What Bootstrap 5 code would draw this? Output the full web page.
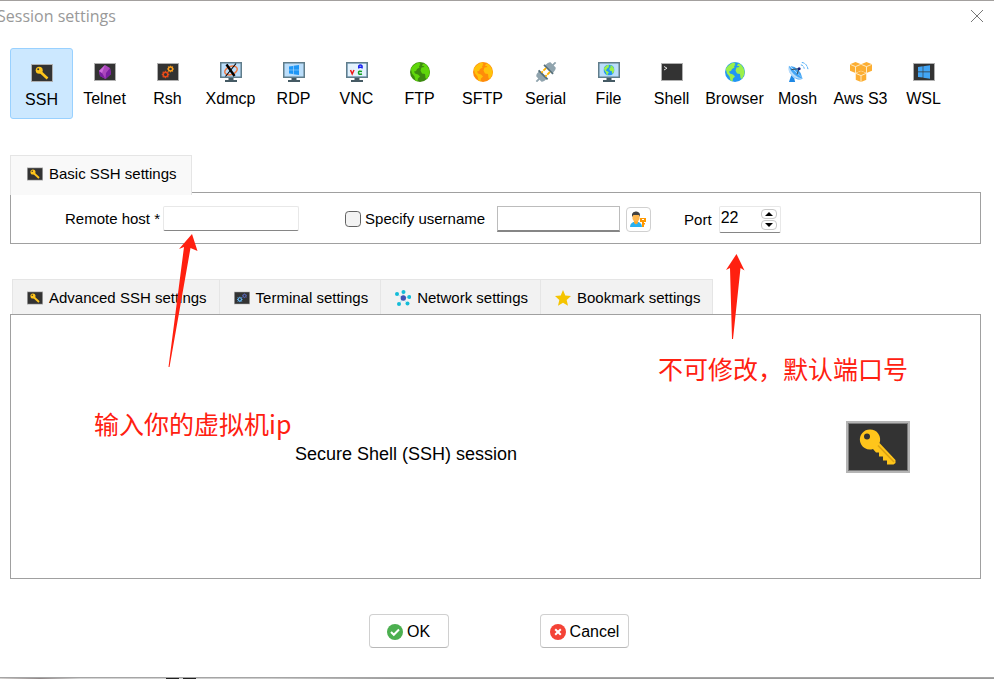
<!DOCTYPE html>
<html lang="en">
<head>
<meta charset="utf-8">
<meta name="viewport" content="width=device-width, initial-scale=1">
<title>Session settings</title>
<link href="https://cdn.jsdelivr.net/npm/bootstrap@5.3.0/dist/css/bootstrap.min.css" rel="stylesheet">
<style>
  body { font-family: "Liberation Sans", Arial, sans-serif; font-size: 15px; line-height: 20px; color: #000; background: #fff; }
  .dialog { border-top: 1px solid #a3a09e; }
  .dialog-head { height: 47px; padding-right: 10px; }
  .dialog-title { font-family: "Open Sans", "Noto Sans", sans-serif; font-size: 16px; line-height: 30px; margin: 0 0 0 -3px; color: #999; font-weight: 400; }
  .close-btn { width: 14px; height: 30px; color: #777; }
  .dialog-main { padding: 0 13px 0 10px; }
  .kinds { margin-bottom: 36px; }
  .kind { width: 63px; height: 71px; padding: 0 0 9px; gap: 7px; border: 1px solid transparent; border-radius: 3px; background: none; font-size: 16px; color: #000; white-space: nowrap; }
  .kind.active { background: #cce8ff; border-color: #99d1ff; padding-bottom: 8px; }
  .kind svg { width: 22px; height: 20px; }
  .set-tabs { border: 0; }
  .set-tabs .nav-link { display: flex; align-items: center; gap: 6px; height: 35px; padding: 2px 12px 0 14px; margin: 0; color: #000; background: #f2f2f2; border: 1px solid #e5e5e5; border-width: 1px 0 0 1px; border-radius: 0; }
  .set-tabs .nav-item:last-child .nav-link { border-right-width: 1px; }
  .set-tabs svg { width: 16px; height: 16px; }
  .set-tabs.basic .nav-link { height: 40px; margin-bottom: -3px; padding: 0 14px 4px 16px; background: #f9f9f9; position: relative; z-index: 1; }
  .set-tabs.more { margin: 35px 0 0 2px; }
  .pane { border: 1px solid #a0a0a0; }
  .basic-pane { padding: 13px 0 10px 54px; min-height: 52px; }
  .field { height: 25px; padding: 0 2px; border: 1px solid #e8e8e8; border-bottom-color: #868686; border-radius: 2px; background: #fff; }
  .host-field { width: 136px; }
  .user-field { width: 123px; height: 26px; border-color: #bcbcbc; border-bottom: 2px solid #868686; border-radius: 0; }
  .host-group { gap: 3px; margin-right: 46px; }
  .user-group { gap: 4px; margin-right: 33px; }
  .user-group .user-field { margin-left: 8px; }
  .tick { width: 16px; height: 16px; margin: 0; border: 1px solid #626262; border-radius: 3px; background-color: #f3f3f3; }
  .user-btn { width: 25px; height: 25px; margin-left: 2px; border: 1px solid #d0d0d0; border-radius: 4px; background: #fff; }
  .user-btn svg { width: 17px; height: 17px; }
  .port-group { gap: 7px; }
  .port-box { width: 62px; height: 27px; padding: 0 3px 0 0; }
  .port-box input { width: 38px; padding: 0 0 3px 1px; border: 0; background: none; font-size: 16px; line-height: 20px; }
  .steps { gap: 1px; }
  .step { width: 16px; height: 10px; border: 1px solid #c8c8c8; border-radius: 4px; background: #fff; }
  .step svg { width: 8px; height: 4px; }
  .info-pane { min-height: 265px; }
  .info-text { font-size: 18px; line-height: 24px; padding: 14px 0 0 25px; }
  .info-key { width: 204px; }
  .info-key svg { width: 64px; height: 52px; }
  .actions { padding: 35px 0 29px 4px; gap: 91px; }
  .act { height: 34px; padding: 1px 9px 0; gap: 4px; border: 1px solid #d0d0d0; border-bottom-color: #b8b8b8; border-radius: 4px; background: #fff; font-size: 16px; color: #000; }
  .act-ok { min-width: 80px; }
  .act svg { width: 16px; height: 16px; }
  .desk-edge { height: 2px; background: linear-gradient(#222, #222) 166px 1px / 13px 1px no-repeat, linear-gradient(#222, #222) 183px 1px / 13px 1px no-repeat, linear-gradient(#a5a5a5, #a5a5a5) 0 0 / 100% 1px no-repeat, linear-gradient(90deg, #d5d2d0, #8f8787 40px, #d5d5d5 80px, #ccc 270px, #999 400px); }
  .note { position: absolute; color: #ff2010; font-family: "Noto Sans CJK SC", sans-serif; font-size: 25px; line-height: 36px; white-space: nowrap; pointer-events: none; }
  .note-host { left: 94px; top: 404px; }
  .note-port { left: 658px; top: 349px; }
  .arrow { position: absolute; fill: #ff2010; pointer-events: none; z-index: 2; }
  .arrow-host { left: 166px; top: 231px; }
  .arrow-port { left: 724px; top: 251px; }
  .g-green { --sea: #3c8a10; --land: #5fd60b; }
  .g-orange { --sea: #ff8c0a; --land: #ffc20a; }
  .g-blue { --sea: #2196f3; --land: #9cf04a; }
</style>
<script src="https://cdn.jsdelivr.net/npm/bootstrap@5.3.0/dist/js/bootstrap.bundle.min.js"></script>
</head>
<body>
<svg class="d-none" aria-hidden="true">
  <symbol id="key" viewBox="0 0 64 52">
    <path fill="#b5b5b5" d="M0 0h64v52H0z"/><path fill="#7b7b7b" d="M2 2h60v48H2z"/><path fill="#333" d="M3 3h58v46H3z"/>
    <path fill="#ffc51b" d="M24 8.500a10 10 0 0 1 9.500 13.500L49.500 39v3l-2 1.500H41v-4h-4v-4h-4v-4h-3l-3-3.500A10 10 0 1 1 24 8.500z"/>
    <circle cx="21" cy="15.500" r="3" fill="#333"/><path stroke="#dba111" stroke-width="1.500" d="M32 24.500 48 41"/>
  </symbol>
  <symbol id="key-s" viewBox="0 0 22 18">
    <path fill="#b0b0b0" d="M0 0h22v18H0z"/><path fill="#333" d="M1 1h20v16H1z"/>
    <circle cx="8.200" cy="6.300" r="3.500" fill="#ffc51b"/><path d="m9.500 8 7 6.500" stroke="#ffc51b" stroke-width="2.600"/><circle cx="7.200" cy="5.300" r="1" fill="#333"/>
  </symbol>
  <symbol id="globe" viewBox="0 0 20 20">
    <circle cx="10" cy="10" r="10" fill="var(--sea)"/>
    <path fill="var(--land)" d="M4 3 7 1l4-.5L9.500 2l1 1L9 4l.5 1.500L7 7l-1 2-2 .5 1 2 3 1 2 2-2 2-.5 3-2-1-1-4-2.500-3L.8 7 2 5zM13 1.500l3 1L18.500 6l1.200 4-.7 3-2 4-1.500-1-.5-4-3-.5-1.500-3 1-3 3-.5-1-1-1.500 0z"/>
  </symbol>
  <symbol id="monitor" viewBox="0 0 22 20">
    <path fill="#607d8b" d="M0 0h22v16H0z"/><path fill="#bbdefb" d="M1.500 1.500h19v13h-19z"/><path fill="#455a64" d="M8.500 16h5v2h-5zM5 18h12v2H5z"/>
  </symbol>
  <symbol id="tile" viewBox="0 0 22 18"><path fill="#b0b0b0" d="M0 0h22v18H0z"/><path fill="#333" d="M1 1h20v16H1z"/></symbol>
  <symbol id="gear" viewBox="0 0 8 8"><circle cx="4" cy="4" r="2.300" fill="none" stroke="currentColor" stroke-width="1.500"/><path d="M4 0v1.500M4 6.500V8M0 4h1.500M6.500 4H8M1.200 1.200l1 1M5.800 5.800l1 1M1.200 6.800l1-1M5.800 2.200l1-1" stroke="currentColor" stroke-width="1.300"/></symbol>
  <symbol id="cube" viewBox="0 0 10 10"><path fill="#fcae32" d="m5 0 5 2v6l-5 2-5-2V2z"/><path fill="none" stroke="#fff1d5" stroke-width=".8" d="m.3 2.200 4.700 2 4.700-2M5 4.200V10"/></symbol>
</svg>

<div class="dialog position-relative d-flex flex-column min-vh-100">
  <header class="dialog-head d-flex justify-content-between align-items-start">
    <h1 class="dialog-title">Session settings</h1>
    <button type="button" class="close-btn btn p-0 border-0 d-flex align-items-center" aria-label="Close">
      <svg width="14" height="14" viewBox="0 0 14 14" fill="none" stroke="currentColor"><path d="m1 1 12 12M13 1 1 13"/></svg>
    </button>
  </header>

  <main class="dialog-main d-flex flex-column flex-grow-1">
    <nav class="kinds d-flex flex-wrap" aria-label="Session type">
      <button type="button" class="kind active d-flex flex-column align-items-center justify-content-end"><svg viewBox="0 0 22 20"><use href="#key-s" y="1" width="22" height="18"/></svg>SSH</button>
      <button type="button" class="kind d-flex flex-column align-items-center justify-content-end"><svg viewBox="0 0 22 20"><use href="#tile" y="1" width="22" height="18"/><path fill="#ab47bc" d="m11 3 5 3 1 6-5.500 5L6 14l-1-5z"/><path fill="#7b1fa2" d="m5 9 3 2 3.500 6L6 14zM16 6l-4 5-.5 6L17 12z"/><path fill="#ce6bdd" d="m11 3-3 8-3-2z"/></svg>Telnet</button>
      <button type="button" class="kind d-flex flex-column align-items-center justify-content-end"><svg viewBox="0 0 22 20"><use href="#tile" y="1" width="22" height="18"/><use href="#gear" x="4.500" y="8.500" width="8" height="8" color="#e64a19"/><use href="#gear" x="10" y="3.500" width="7" height="7" color="#ff9f1a"/></svg>Rsh</button>
      <button type="button" class="kind d-flex flex-column align-items-center justify-content-end"><svg viewBox="0 0 22 20"><use href="#monitor" width="22" height="20"/><ellipse cx="11" cy="8.500" rx="6.500" ry="4" fill="none" stroke="#f07840" stroke-width="1.500" transform="rotate(-20 11 8.500)"/><path d="m6.500 2.500 8 11.500" stroke="#000" stroke-width="2.400"/><path d="M16 1.500 5.500 14.500" stroke="#000" stroke-width="1.100"/></svg>Xdmcp</button>
      <button type="button" class="kind d-flex flex-column align-items-center justify-content-end"><svg viewBox="0 0 22 20"><use href="#monitor" width="22" height="20"/><path fill="#1e96f5" d="m6 4.500 4-.6v3.800H6zm4.600-.7L16 3v4.700h-5.400zM6 8.300h4V12l-4-.6zm4.600 0H16V13l-5.400-.8z"/></svg>RDP</button>
      <button type="button" class="kind d-flex flex-column align-items-center justify-content-end"><svg viewBox="0 0 22 20"><use href="#monitor" width="22" height="20"/><path fill="#e3f2fd" d="M2 2h18v12H2z"/><path fill="none" stroke="#f01818" stroke-width="1.500" d="m4.500 8 1.700 4L8 8"/><path fill="none" stroke="#1a22f0" stroke-width="1.400" d="M12.700 6.500V4q1.700-2 3.400 0v2.500m-3.400-1.200h3.400"/><path fill="none" stroke="#12a020" stroke-width="1.500" d="M16 9.500q-3.500-1-3.500 1.300t3.500 1.200"/></svg>VNC</button>
      <button type="button" class="kind d-flex flex-column align-items-center justify-content-end"><svg class="g-green"><use href="#globe" x="1" width="20" height="20"/></svg>FTP</button>
      <button type="button" class="kind d-flex flex-column align-items-center justify-content-end"><svg class="g-orange"><use href="#globe" x="1" width="20" height="20"/></svg>SFTP</button>
      <button type="button" class="kind d-flex flex-column align-items-center justify-content-end"><svg viewBox="0 0 22 22"><g transform="rotate(45 11 11)"><path fill="#90a4ae" d="M10-4h2v4h3q2 1 2 6H5q0-5 2-6h3zM5 16h12q0 5-2 6h-3v4h-2v-4H7q-2-1-2-6z"/><path fill="#546e7a" d="M4 6h14v2H4zM4 14.500h14v2H4z"/><path fill="#ffb300" d="M7 8h2v4H7zm6 0h2v4h-2zM7 13h2v2H7zm6 0h2v2h-2z"/></g></svg>Serial</button>
      <button type="button" class="kind d-flex flex-column align-items-center justify-content-end"><svg viewBox="0 0 22 20" class="g-blue"><use href="#monitor" width="22" height="20"/><use href="#globe" x="5.500" y="2.500" width="11" height="11"/></svg>File</button>
      <button type="button" class="kind d-flex flex-column align-items-center justify-content-end"><svg viewBox="0 0 22 20"><use href="#tile" y="1" width="22" height="18"/><path fill="none" stroke="#ddd" d="m3 4.500 3 1.700L3 8"/></svg>Shell</button>
      <button type="button" class="kind d-flex flex-column align-items-center justify-content-end"><svg class="g-blue"><use href="#globe" x="1" width="20" height="20"/></svg>Browser</button>
      <button type="button" class="kind d-flex flex-column align-items-center justify-content-end"><svg viewBox="0 0 22 21"><path fill="#1e88e5" d="m4 14-2.500 7H8l-1-4z"/><path fill="#42a5f5" d="M1.500 4 16 17q-2 2.500-7 .5Q0 13 1.500 4z"/><path fill="#42a5f5" d="M3 4.500q4-.5 8 3.500t4.500 8.500z"/><path fill="#bbdefb" d="M1.500 4q-2 5 3 10t11.500 3q-5 0-9.500-4.500T1.500 4z"/><path fill="none" stroke="#37474f" d="M4 8l8-1-2 6"/><circle cx="12.200" cy="7" r="1.600" fill="#1a237e"/><path fill="none" stroke="#42a5f5" d="M14 3q3 .5 3.500 4M15 .5q5 .5 6.500 7" stroke-dasharray="3 .7"/></svg>Mosh</button>
      <button type="button" class="kind d-flex flex-column align-items-center justify-content-end"><svg viewBox="0 0 22 20"><use href="#cube" x="0" y="0" width="11" height="11"/><use href="#cube" x="11" y="0" width="11" height="11"/><use href="#cube" x="5.500" y="9" width="11" height="11"/></svg>Aws S3</button>
      <button type="button" class="kind d-flex flex-column align-items-center justify-content-end"><svg viewBox="0 0 22 20"><use href="#tile" y="1" width="22" height="18"/><path fill="#42a5f5" d="m5 5 4.700-.7v5.300H5zm5.300-.8L17 3.200v6.400h-6.700zM5 10.300h4.700v5.300L5 15zm5.300 0H17v6.400l-6.700-1z"/></svg>WSL</button>
    </nav>

    <ul class="nav nav-tabs set-tabs basic">
      <li class="nav-item"><button type="button" class="nav-link"><svg><use href="#key-s"/></svg>Basic SSH settings</button></li>
    </ul>
    <form class="pane basic-pane d-flex flex-wrap align-items-start">
      <div class="host-group d-flex align-items-center">
        <label for="host">Remote host *</label>
        <input id="host" type="text" class="field host-field">
      </div>
      <div class="user-group d-flex align-items-center">
        <input id="specify" type="checkbox" class="form-check-input tick">
        <label for="specify">Specify username</label>
        <input type="text" class="field user-field" aria-label="Username">
        <button type="button" class="user-btn p-0 d-flex align-items-center justify-content-center" aria-label="Choose user">
          <svg viewBox="0 0 17 17"><path fill="#29b0f0" d="M0 16q0-5 6-5.500 6 .5 6 5.500z"/><path fill="#ffa726" d="M4 9h4v3l-2 1.500L4 12z"/><path fill="#ffb74d" d="M2.500 4h7v4L8 10.500H4L2.500 8z"/><path fill="#424242" d="M2 6V3q1-3 4.500-2.500Q10 1 10 4v2L9 4H3.500z"/><path fill="#ff9800" d="M10 7h6v4h-2v1h1v1.500h-1V16h-2v-5h-2z"/><path fill="#fff" d="M12 8h2v1h-2z"/></svg>
        </button>
      </div>
      <div class="port-group d-flex align-items-center">
        <label for="port">Port</label>
        <div class="field port-box d-flex align-items-center justify-content-between">
          <input id="port" type="text" inputmode="numeric" value="22">
          <div class="steps d-flex flex-column">
            <button type="button" class="step p-0 d-flex align-items-center justify-content-center" aria-label="Increase port"><svg viewBox="0 0 8 4"><path d="m0 4 4-4 4 4z"/></svg></button>
            <button type="button" class="step p-0 d-flex align-items-center justify-content-center" aria-label="Decrease port"><svg viewBox="0 0 8 4"><path d="m0 0 4 4 4-4z"/></svg></button>
          </div>
        </div>
      </div>
    </form>

    <ul class="nav nav-tabs set-tabs more">
      <li class="nav-item"><button type="button" class="nav-link"><svg><use href="#key-s"/></svg>Advanced SSH settings</button></li>
      <li class="nav-item"><button type="button" class="nav-link"><svg viewBox="0 0 22 22"><use href="#tile" y="2" width="22" height="18"/><use href="#gear" x="4" y="9" width="8" height="8" color="#64b5f6"/><use href="#gear" x="11" y="4.500" width="7" height="7" color="#5c6bc0"/></svg>Terminal settings</button></li>
      <li class="nav-item"><button type="button" class="nav-link"><svg viewBox="0 0 16 16"><path d="m2 4 6 4 6.500-1M8 8V2M4 14.500 8 8l4.500 6" stroke="#b7e8f2" fill="none"/><g fill="#13bcd8"><circle cx="2" cy="4" r="2"/><circle cx="8.500" cy="2" r="2"/><circle cx="14.200" cy="7" r="2"/><circle cx="4" cy="14" r="2"/><circle cx="12.500" cy="13.500" r="2"/></g><circle cx="8.300" cy="8" r="2.700" fill="#3f51b5"/></svg>Network settings</button></li>
      <li class="nav-item"><button type="button" class="nav-link"><svg viewBox="0 0 16 16"><path fill="#f5c400" d="m8 0 2.300 5.500 5.700.6-4.300 4 1.300 5.700-5-3-5 3 1.300-5.700L0 6.100l5.700-.6z"/></svg>Bookmark settings</button></li>
    </ul>
    <section class="pane info-pane d-flex flex-grow-1 align-items-center">
      <div class="info-text flex-grow-1 text-center">Secure Shell (SSH) session</div>
      <div class="info-key text-center"><svg><use href="#key"/></svg></div>
    </section>
  </main>

  <footer class="actions d-flex justify-content-center">
    <button type="button" class="act act-ok d-flex align-items-center justify-content-center"><svg viewBox="0 0 16 16"><circle cx="8" cy="8" r="8" fill="#4caf50"/><path d="m4 8 2.800 2.800L12 5.500" fill="none" stroke="#fff" stroke-width="2"/></svg>OK</button>
    <button type="button" class="act d-flex align-items-center justify-content-center"><svg viewBox="0 0 16 16"><circle cx="8" cy="8" r="8" fill="#f44336"/><path d="m5.200 5.200 5.600 5.600m0-5.600-5.600 5.600" stroke="#fff" stroke-width="2"/></svg>Cancel</button>
  </footer>
  <div class="desk-edge"></div>

  <svg class="arrow arrow-host" width="34" height="138" viewBox="0 0 34 138"><path d="M26 2 31.500 19 24.500 16 3.500 135h-1L18 15l-5 2z"/></svg>
  <svg class="arrow arrow-port" width="24" height="90" viewBox="0 0 24 90"><path d="m12.500 2 8 16.500-4-2.500L9 87H8L6 16l-4 2z"/></svg>
  <div class="note note-host" lang="zh">输入你的虚拟机ip</div>
  <div class="note note-port" lang="zh">不可修改，默认端口号</div>
</div>
</body>
</html>
